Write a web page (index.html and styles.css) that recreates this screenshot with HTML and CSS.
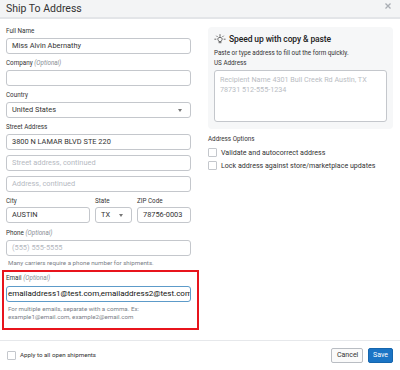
FILE: index.html
```html
<!DOCTYPE html>
<html lang="en">
<head>
  <meta charset="UTF-8">
  <title>Ship To Address</title>
  <link rel="stylesheet" href="styles.css">
</head>
<body>
  <div class="modal">
    <div class="modal-header">
      <span class="modal-title">Ship To Address</span>
      <svg class="close-icon" width="6" height="6" viewBox="0 0 6 6">
        <path d="M0.5 0.5 L5.5 5.5 M5.5 0.5 L0.5 5.5" stroke="#a9adb3" stroke-width="1.3" fill="none"/>
      </svg>
    </div>

    <div class="modal-body">
      <div class="col-left">
        <div class="field">
          <label>Full Name</label>
          <div class="input">Miss Alvin Abernathy</div>
        </div>
        <div class="field">
          <label>Company <span class="optional">(Optional)</span></label>
          <div class="input"></div>
        </div>
        <div class="field">
          <label>Country</label>
          <div class="input select">United States <span class="caret"></span></div>
        </div>
        <div class="field street">
          <label>Street Address</label>
          <div class="input">3800 N LAMAR BLVD STE 220</div>
          <div class="input placeholder more">Street address, continued</div>
          <div class="input placeholder more">Address, continued</div>
        </div>
        <div class="row-3">
          <div class="field city">
            <label>City</label>
            <div class="input">AUSTIN</div>
          </div>
          <div class="field state">
            <label>State</label>
            <div class="input select">TX <span class="caret"></span></div>
          </div>
          <div class="field zip">
            <label>ZIP Code</label>
            <div class="input">78756-0003</div>
          </div>
        </div>
        <div class="field phone">
          <label>Phone <span class="optional">(Optional)</span></label>
          <div class="input placeholder">(555) 555-5555</div>
          <div class="help">Many carriers require a phone number for shipments.</div>
        </div>
        <div class="highlight">
          <label>Email <span class="optional">(Optional)</span></label>
          <div class="input email">emailaddress1@test.com,emailaddress2@test.com</div>
          <div class="help two-line">For multiple emails, separate with a comma. Ex:<br>example1@email.com, example2@email.com</div>
        </div>
      </div>

      <div class="col-right">
        <div class="paste-panel">
          <div class="paste-title">
            <svg class="bulb" width="12" height="10" viewBox="0 0 12 10">
              <g stroke="#444" stroke-width="0.8" fill="none" stroke-linecap="round">
                <path d="M6 3.2 C4.4 3.2 3.6 4.4 3.9 5.6 C4.1 6.4 4.8 6.8 4.9 7.6 L7.1 7.6 C7.2 6.8 7.9 6.4 8.1 5.6 C8.4 4.4 7.6 3.2 6 3.2 Z"/>
                <path d="M5 8.7 L7 8.7"/>
                <path d="M6 0.6 L6 1.6"/>
                <path d="M2.6 2 L3.3 2.7"/>
                <path d="M9.4 2 L8.7 2.7"/>
                <path d="M0.8 5.2 L1.9 5.2"/>
                <path d="M10.1 5.2 L11.2 5.2"/>
              </g>
            </svg>
            Speed up with copy &amp; paste
          </div>
          <div class="paste-sub">Paste or type address to fill out the form quickly.</div>
          <label>US Address</label>
          <div class="textarea">Recipient Name 4301 Bull Creek Rd Austin, TX<br>78731 512-555-1234</div>
        </div>

        <div class="options">
          <label>Address Options</label>
          <div class="check-row"><span class="box"></span>Validate and autocorrect address</div>
          <div class="check-row"><span class="box"></span>Lock address against store/marketplace updates</div>
        </div>
      </div>
    </div>

    <div class="modal-footer">
      <div class="apply"><span class="box"></span>Apply to all open shipments</div>
      <div class="buttons">
        <button class="btn btn-cancel">Cancel</button>
        <button class="btn btn-save">Save</button>
      </div>
    </div>
  </div>
</body>
</html>
```

FILE: styles.css
```css
body {
  margin: 0;
  font-family: Roboto, "Liberation Sans", Arial, sans-serif;
  background: #fff;
  color: #333;
}
.modal {
  width: 400px;
  height: 370px;
  background: #fff;
}
.modal-header {
  height: 17px;
  background: #f3f4f5;
  border-bottom: 2px solid #e3e5e8;
  display: flex;
  align-items: center;
  justify-content: space-between;
  padding: 0 9px 0 6px;
}
.modal-title {
  font-size: 10.5px;
  color: #333;
}
.close-icon {
  margin-top: -6px;
}
.modal-body {
  height: 321px;
  box-sizing: border-box;
  display: flex;
  gap: 17px;
  padding: 7px 0 0 6px;
}
.col-left {
  width: 185px;
}
.col-right {
  width: 185px;
  padding-top: 1px;
}
label {
  display: block;
  font-size: 6.3px;
  line-height: 10px;
  height: 10px;
  margin-bottom: 2px;
  color: #333;
}
.optional {
  color: #8a8f96;
  font-style: italic;
}
.field {
  margin-bottom: 4px;
}
.input {
  height: 16px;
  box-sizing: border-box;
  border: 1px solid #c4c7cc;
  border-radius: 3px;
  padding: 0 5px;
  font-size: 7.4px;
  line-height: 14px;
  color: #333;
  white-space: nowrap;
  overflow: hidden;
}
.placeholder {
  color: #b5b9bf;
}
.select {
  position: relative;
}
.caret {
  position: absolute;
  right: 8px;
  top: 6px;
  border-left: 2.5px solid transparent;
  border-right: 2.5px solid transparent;
  border-top: 3px solid #777;
}
.street {
  margin-top: 2px;
}
.more {
  margin-top: 5px;
}
.row-3 {
  display: flex;
  gap: 5px;
}
.row-3 label {
  margin-bottom: 1px;
}
.city {
  width: 84px;
}
.state {
  width: 37px;
}
.zip {
  width: 54px;
}
.phone {
  margin-top: 1px;
  margin-bottom: 0;
}
.help {
  font-size: 6.2px;
  line-height: 10px;
  color: #7b8087;
  margin-top: 2px;
  padding-left: 2px;
}
.highlight {
  margin: 2px -8px 0 -4px;
  border: 2px solid #e8141c;
  padding: 1px 6px 7px 2px;
}
.highlight label {
  margin-bottom: 3px;
}
.email {
  border-color: #5d9bc9;
  font-size: 8px;
  color: #111;
  padding: 0 1px;
}
.two-line {
  line-height: 8px;
  margin-top: 3px;
}
.paste-panel {
  background: #f6f7f8;
  border-radius: 4px;
  padding: 5px 6px 7px 6px;
}
.paste-title {
  display: flex;
  align-items: center;
  gap: 3px;
  font-size: 8.5px;
  font-weight: 500;
  letter-spacing: -0.1px;
  line-height: 14px;
  color: #222;
}
.paste-sub {
  font-size: 6.3px;
  line-height: 10px;
  margin-top: 2px;
  color: #333;
}
.paste-panel label {
  margin-bottom: 2px;
}
.textarea {
  height: 52px;
  box-sizing: border-box;
  background: #fff;
  border: 1px solid #c4c7cc;
  border-radius: 3px;
  padding: 4px 5px;
  font-size: 7.2px;
  line-height: 10px;
  color: #b9bdc3;
}
.options {
  margin-top: 5px;
}
.check-row {
  display: flex;
  align-items: center;
  gap: 4px;
  font-size: 7.1px;
  line-height: 13px;
  color: #333;
}
.options label {
  margin-bottom: 2px;
}
.box {
  width: 7px;
  height: 7px;
  border: 1px solid #c4c7cc;
  border-radius: 1px;
  background: #fff;
  flex-shrink: 0;
}
.modal-footer {
  border-top: 1px solid #e6e8eb;
  height: 29px;
  box-sizing: border-box;
  display: flex;
  justify-content: space-between;
  align-items: center;
  padding: 0 7px 0 7px;
}
.apply {
  display: flex;
  align-items: center;
  gap: 4px;
  font-size: 6.2px;
  color: #333;
}
.buttons {
  display: flex;
  gap: 5px;
}
.btn {
  height: 15px;
  font-family: inherit;
  font-size: 7px;
  border-radius: 2px;
  padding: 0 5px;
  cursor: pointer;
}
.btn-cancel {
  width: 32px;
  background: #fafafa;
  border: 1px solid #b9bdc3;
  color: #333;
}
.btn-save {
  width: 25px;
  padding: 0;
  background: #1b74c5;
  border: 1px solid #1666ad;
  color: #fff;
}
```
